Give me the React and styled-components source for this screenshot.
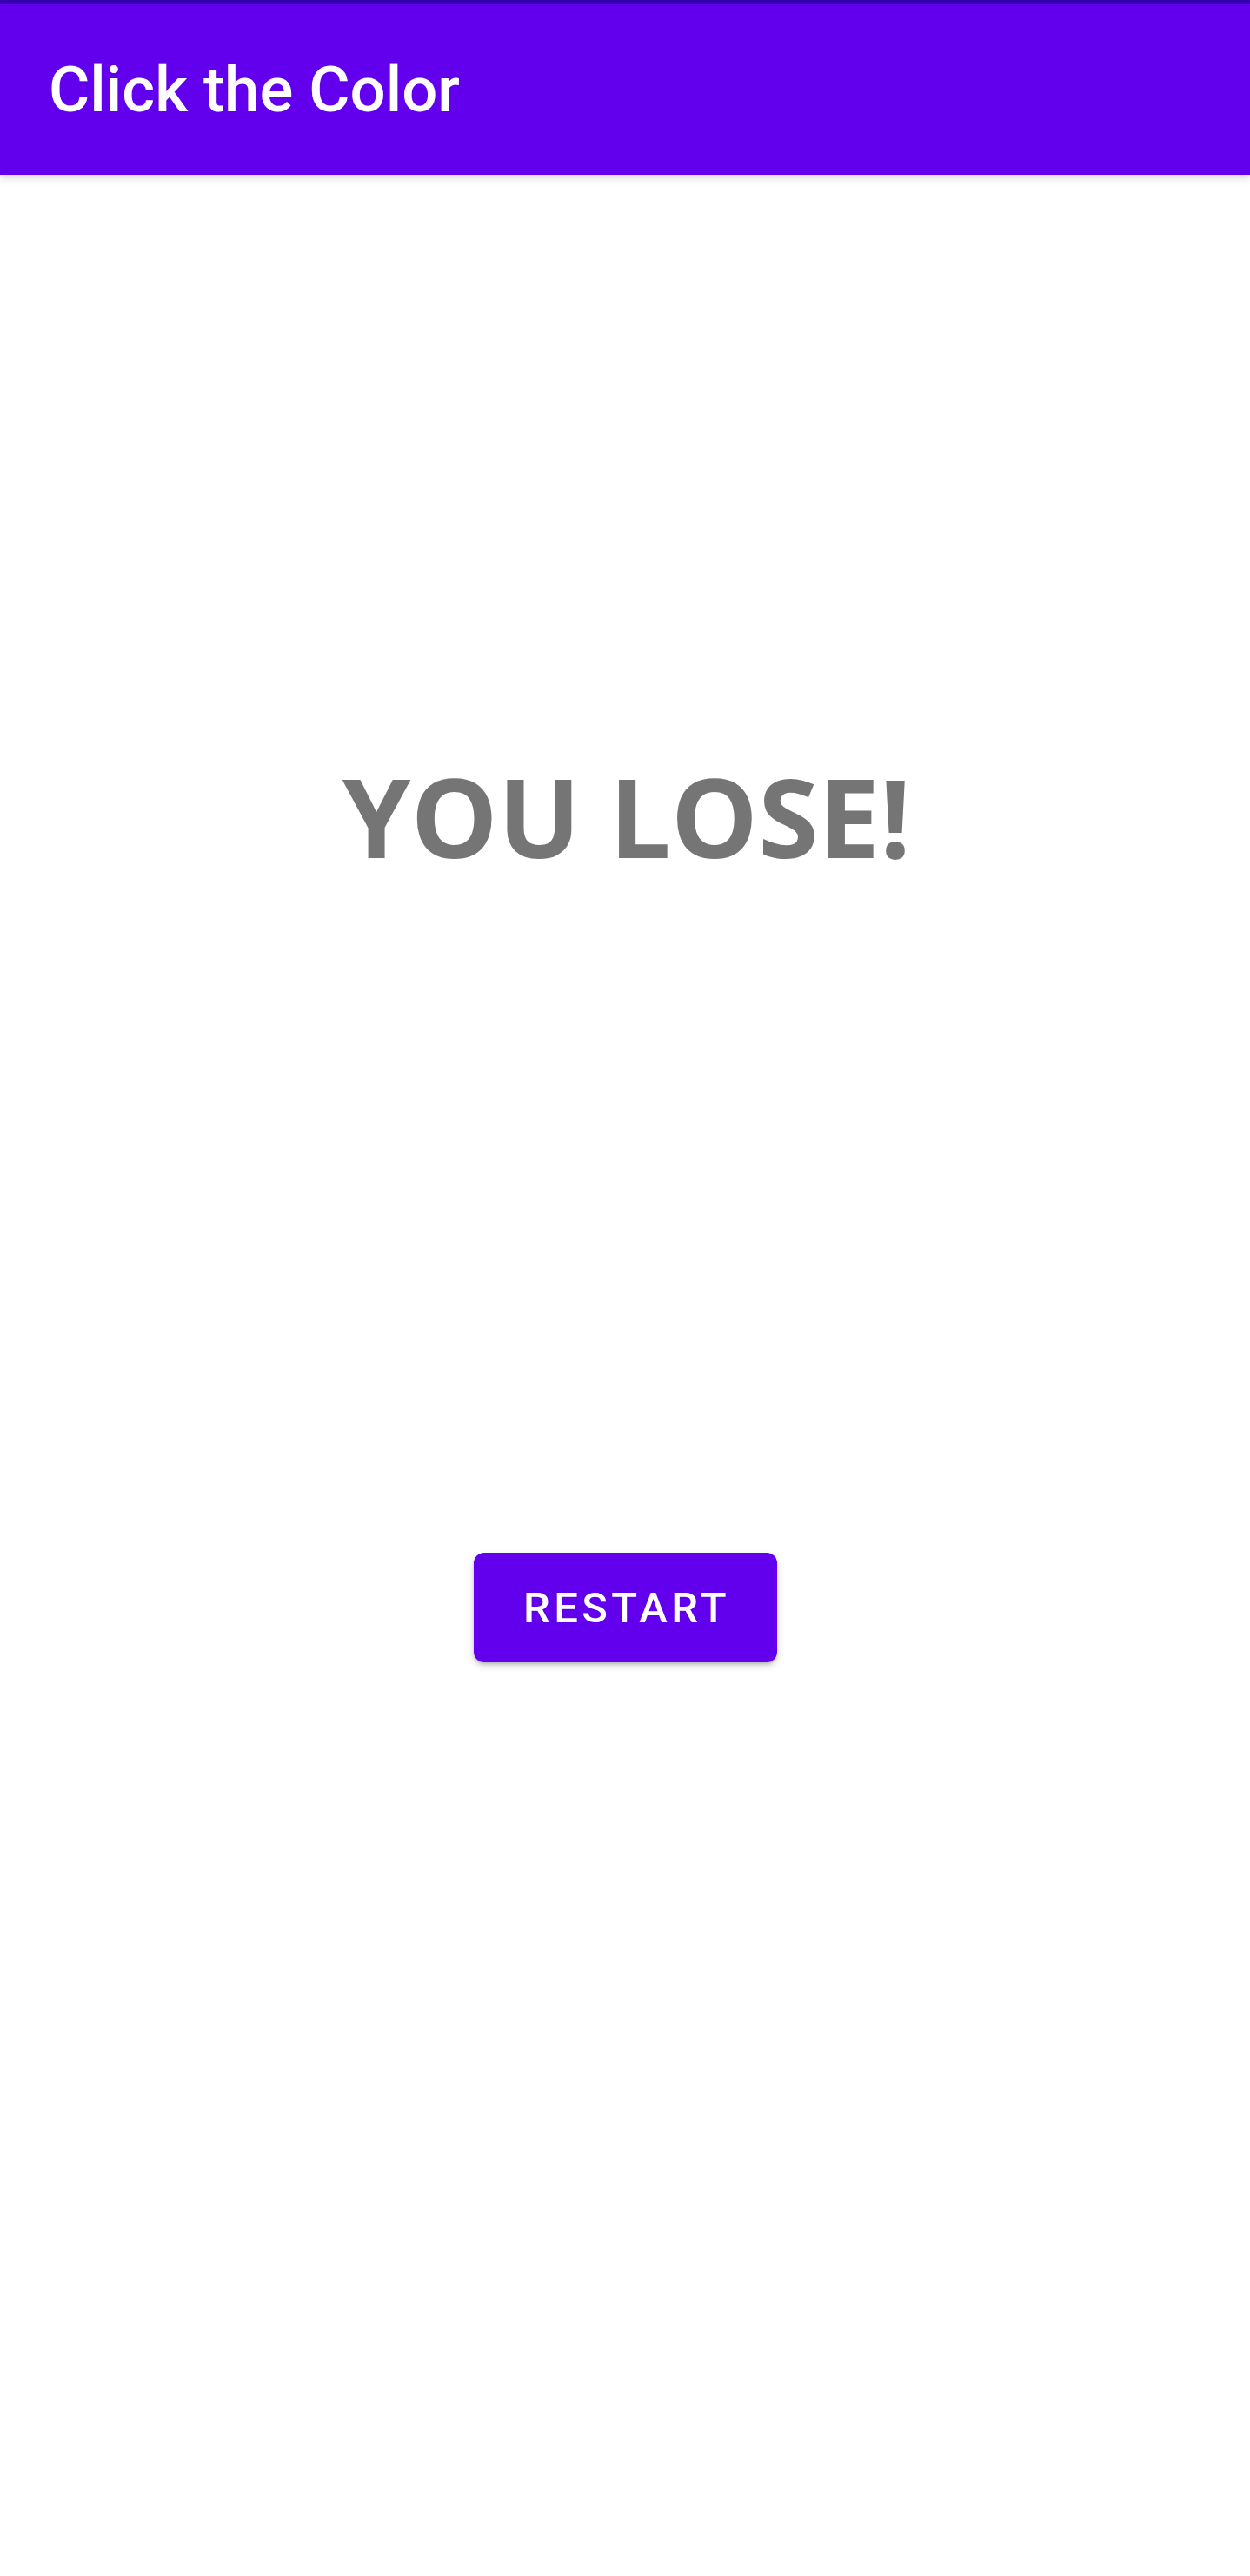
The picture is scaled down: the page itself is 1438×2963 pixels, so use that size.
import React from "react";
import styled, { createGlobalStyle } from "styled-components";

const GlobalStyle = createGlobalStyle`
  html, body {
    margin: 0;
    padding: 0;
    background: #ffffff;
  }
  * { box-sizing: border-box; }
`;

const Page = styled.div`
  min-height: 2963px;
  width: 100%;
  background: #ffffff;
  display: flex;
  flex-direction: column;
`;

const StatusStrip = styled.div`
  height: 5px;
  background: #3700b3;
`;

const AppBar = styled.header`
  height: 196px;
  background: #6200ee;
  display: flex;
  align-items: center;
  padding-left: 56px;
  box-shadow: 0 4px 10px rgba(0, 0, 0, 0.12), 0 2px 4px rgba(0, 0, 0, 0.08);
  position: relative;
  z-index: 1;
`;

const Title = styled.h1`
  margin: 0;
  padding-top: 3px;
  font-family: Roboto, "Liberation Sans", sans-serif;
  font-weight: 500;
  font-size: 72.5px;
  line-height: 1;
  color: #ffffff;
`;

const Content = styled.main`
  display: flex;
  flex-direction: column;
  align-items: center;
  padding-top: 674px;
  gap: 785px;
`;

const Result = styled.div`
  font-family: "Open Sans", "Liberation Sans", sans-serif;
  font-weight: 700;
  font-size: 126px;
  line-height: 1;
  color: #757575;
  padding-left: 4px;
`;

const RestartButton = styled.button`
  width: 349px;
  height: 126px;
  border: none;
  border-radius: 12px;
  background: #6200ee;
  color: #ffffff;
  font-family: Roboto, "Liberation Sans", sans-serif;
  font-weight: 500;
  font-size: 49px;
  letter-spacing: 4.4px;
  text-transform: uppercase;
  display: flex;
  align-items: center;
  justify-content: center;
  padding: 0 0 0 4px;
  box-shadow: 0 4px 8px rgba(0, 0, 0, 0.18), 0 2px 3px rgba(0, 0, 0, 0.14);
  cursor: pointer;
`;

export default function App() {
  return (
    <>
      <GlobalStyle />
      <Page>
        <StatusStrip />
        <AppBar>
          <Title>Click the Color</Title>
        </AppBar>
        <Content>
          <Result>YOU LOSE!</Result>
          <RestartButton>Restart</RestartButton>
        </Content>
      </Page>
    </>
  );
}
